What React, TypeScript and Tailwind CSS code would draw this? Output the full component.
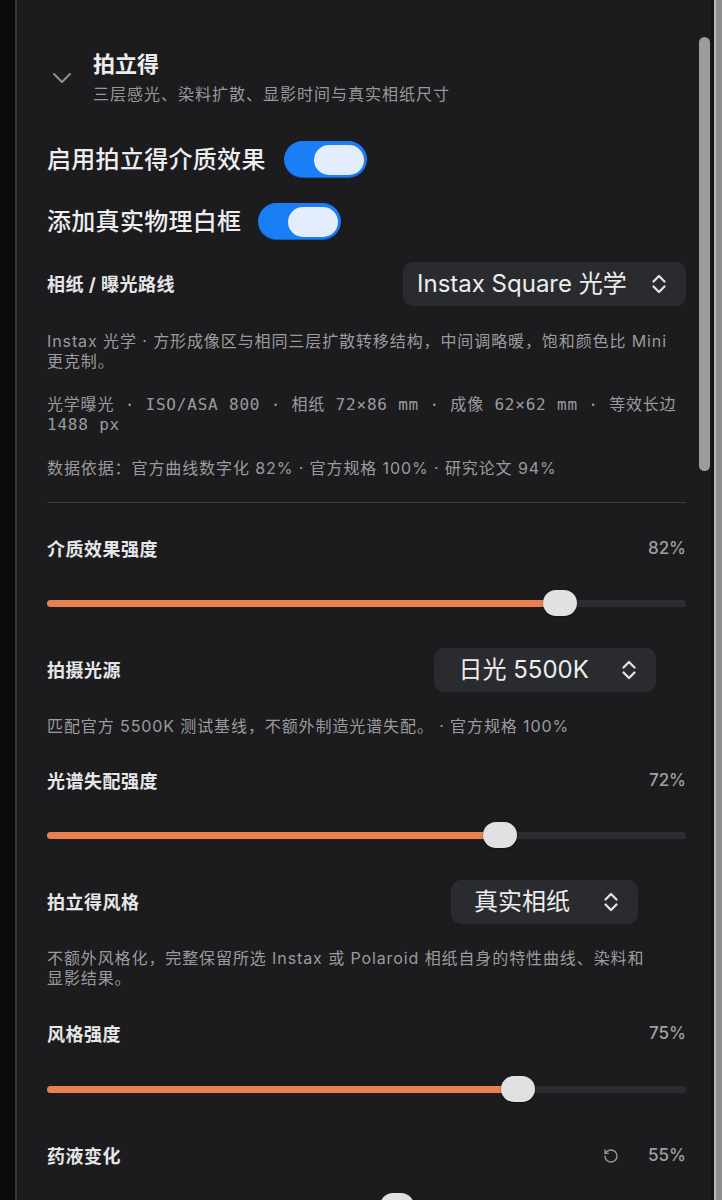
import React from 'react';
import { RotateCcw } from 'lucide-react';

const Toggle: React.FC = () => (
    <div className="flex h-[37px] w-[83px] shrink-0 items-center justify-end rounded-full bg-[#1a7ef6] pr-[3px] shadow-[inset_0_-1px_0_rgba(0,0,0,0.25)]">
        <div className="h-[30px] w-[50px] rounded-full bg-[#e4edfc]" />
    </div>
);

// up/down chevrons used on the popup buttons
const UpDown: React.FC = () => (
    <svg width="16" height="20" viewBox="0 0 16 20" className="shrink-0">
        <path d="M2.5 7.5 L8 2 L13.5 7.5 M2.5 12.5 L8 18 L13.5 12.5" fill="none" stroke="#e2e2e4" strokeWidth="2.3" strokeLinecap="round" strokeLinejoin="round" />
    </svg>
);

const Select: React.FC<{ value: string; className?: string }> = ({ value, className = '' }) => (
    <div className={`flex h-[44px] items-center justify-between rounded-[10px] bg-[#2a2b2e] pr-[19px] text-[24px] leading-none text-[#ededed] ${className}`}>
        <span>{value}</span>
        <UpDown />
    </div>
);

const Slider: React.FC<{ value: number }> = ({ value }) => (
    <div className="relative flex h-[26px] items-center">
        <div className="h-[7px] w-full rounded-full bg-[#2b2c2f]" />
        <div
            className="absolute left-0 h-[7px] rounded-full bg-[#ea7f50]"
            style={{ width: `calc(17px + (100% - 34px) * ${value})` }}
        />
        <div
            className="absolute top-0 h-[26px] w-[34px] rounded-full bg-[#e1e1e1] shadow-[0_1px_2px_rgba(0,0,0,0.4)]"
            style={{ left: `calc((100% - 34px) * ${value})` }}
        />
    </div>
);

const ValueRow: React.FC<{ label: string; value: string; reset?: boolean; className?: string }> = ({ label, value, reset, className = '' }) => (
    <div className={`flex h-[24px] items-center justify-between ${className}`}>
        <span className="text-[18px] font-bold tracking-[0.5px] text-[#e6e6e8]">{label}</span>
        <div className="flex items-center gap-[29px]">
            {reset && <RotateCcw className="h-[16px] w-[16px] text-[#9a9a9e]" strokeWidth={2} />}
            <span className="text-[17px] font-medium text-[#a0a0a3]">{value}</span>
        </div>
    </div>
);

const SelectRow: React.FC<{ label: string; children: React.ReactNode; className?: string }> = ({ label, children, className = '' }) => (
    <div className={`flex items-center justify-between ${className}`}>
        <span className="text-[18px] font-bold tracking-[0.5px] text-[#e6e6e8]">{label}</span>
        <div className="flex w-[283px] justify-center">{children}</div>
    </div>
);

const Note: React.FC<{ children: React.ReactNode; className?: string }> = ({ children, className = '' }) => (
    <p className={`text-[16px] leading-[20px] tracking-[0.9px] text-[#9b9b9f] ${className}`}>{children}</p>
);

export default function App() {
    return (
        <div className="flex h-[1200px] w-[722px] overflow-hidden bg-[#0b0b0c] font-[Inter,'Noto_Sans_CJK_SC',sans-serif]">
            <div className="w-[15px] shrink-0" />
            <div className="w-[2px] shrink-0 bg-[#38383a]" />

            {/* Instant film panel */}
            <div className="relative flex-1 bg-[#1c1c1e] pl-[30px] pr-[25px]">
                <div className="absolute right-[1px] top-[37px] h-[434px] w-[11px] rounded-full bg-[#9c9c9e]" />

                <div className="flex items-center pt-[50px]">
                    <svg width="20" height="12" viewBox="0 0 20 12" className="ml-[5px] mr-[21px]">
                        <path d="M2 2 L10 10 L18 2" fill="none" stroke="#8e8e93" strokeWidth="2" strokeLinecap="round" strokeLinejoin="round" />
                    </svg>
                    <div>
                        <h2 className="text-[22px] font-bold leading-[28px] text-[#ececee]">拍立得</h2>
                        <p className="mt-[5px] text-[16px] leading-[22px] tracking-[1px] text-[#98989c]">三层感光、染料扩散、显影时间与真实相纸尺寸</p>
                    </div>
                </div>

                <div className="mt-[36px] flex items-center gap-[18px]">
                    <span className="text-[24px] font-medium tracking-[0.3px] text-[#ededef]">启用拍立得介质效果</span>
                    <Toggle />
                </div>
                <div className="mt-[25px] flex items-center gap-[17px]">
                    <span className="text-[24px] font-medium tracking-[0.3px] text-[#ededef]">添加真实物理白框</span>
                    <Toggle />
                </div>

                <SelectRow label="相纸 / 曝光路线" className="mt-[22px]">
                    <Select value="Instax Square 光学" className="w-[283px] pl-[14px]" />
                </SelectRow>

                <Note className="mt-[25px]">Instax 光学 · 方形成像区与相同三层扩散转移结构，中间调略暖，饱和颜色比 Mini 更克制。</Note>
                <Note className="mt-[24px] font-['DejaVu_Sans_Mono','Noto_Sans_CJK_SC',monospace] !tracking-[0.8px]">
                    光学曝光 · ISO/ASA 800 · 相纸 72×86 mm · 成像 62×62 mm · 等效长边 1488 px
                </Note>
                <Note className="mt-[23px]">数据依据：官方曲线数字化 82% · 官方规格 100% · 研究论文 94%</Note>

                <div className="mt-[24px] h-px bg-[#3a3a3d]" />

                <ValueRow label="介质效果强度" value="82%" className="mt-[34px]" />
                <div className="mt-[29px]"><Slider value={0.82} /></div>

                <SelectRow label="拍摄光源" className="mt-[32px]">
                    <Select value="日光 5500K" className="w-[222px] pl-[25px]" />
                </SelectRow>
                <Note className="mt-[24px]">匹配官方 5500K 测试基线，不额外制造光谱失配。 · 官方规格 100%</Note>

                <ValueRow label="光谱失配强度" value="72%" className="mt-[33px]" />
                <div className="mt-[29px]"><Slider value={0.72} /></div>

                <SelectRow label="拍立得风格" className="mt-[32px]">
                    <Select value="真实相纸" className="w-[187px] pl-[23px]" />
                </SelectRow>
                <Note className="mt-[24px]">
                    不额外风格化，完整保留所选 Instax 或 Polaroid 相纸自身的特性曲线、染料和<br />显影结果。
                </Note>

                <ValueRow label="风格强度" value="75%" className="mt-[34px]" />
                <div className="mt-[30px]"><Slider value={0.75} /></div>

                <ValueRow label="药液变化" value="55%" reset className="mt-[42px]" />
                <div className="mt-[25px]"><Slider value={0.55} /></div>
            </div>

            <div className="w-[3px] shrink-0 bg-[#141415]" />
            <div className="w-[2px] shrink-0 bg-[#b8b8ba]" />
            <div className="w-[6px] shrink-0 bg-[#8e8e90]" />
        </div>
    );
}
